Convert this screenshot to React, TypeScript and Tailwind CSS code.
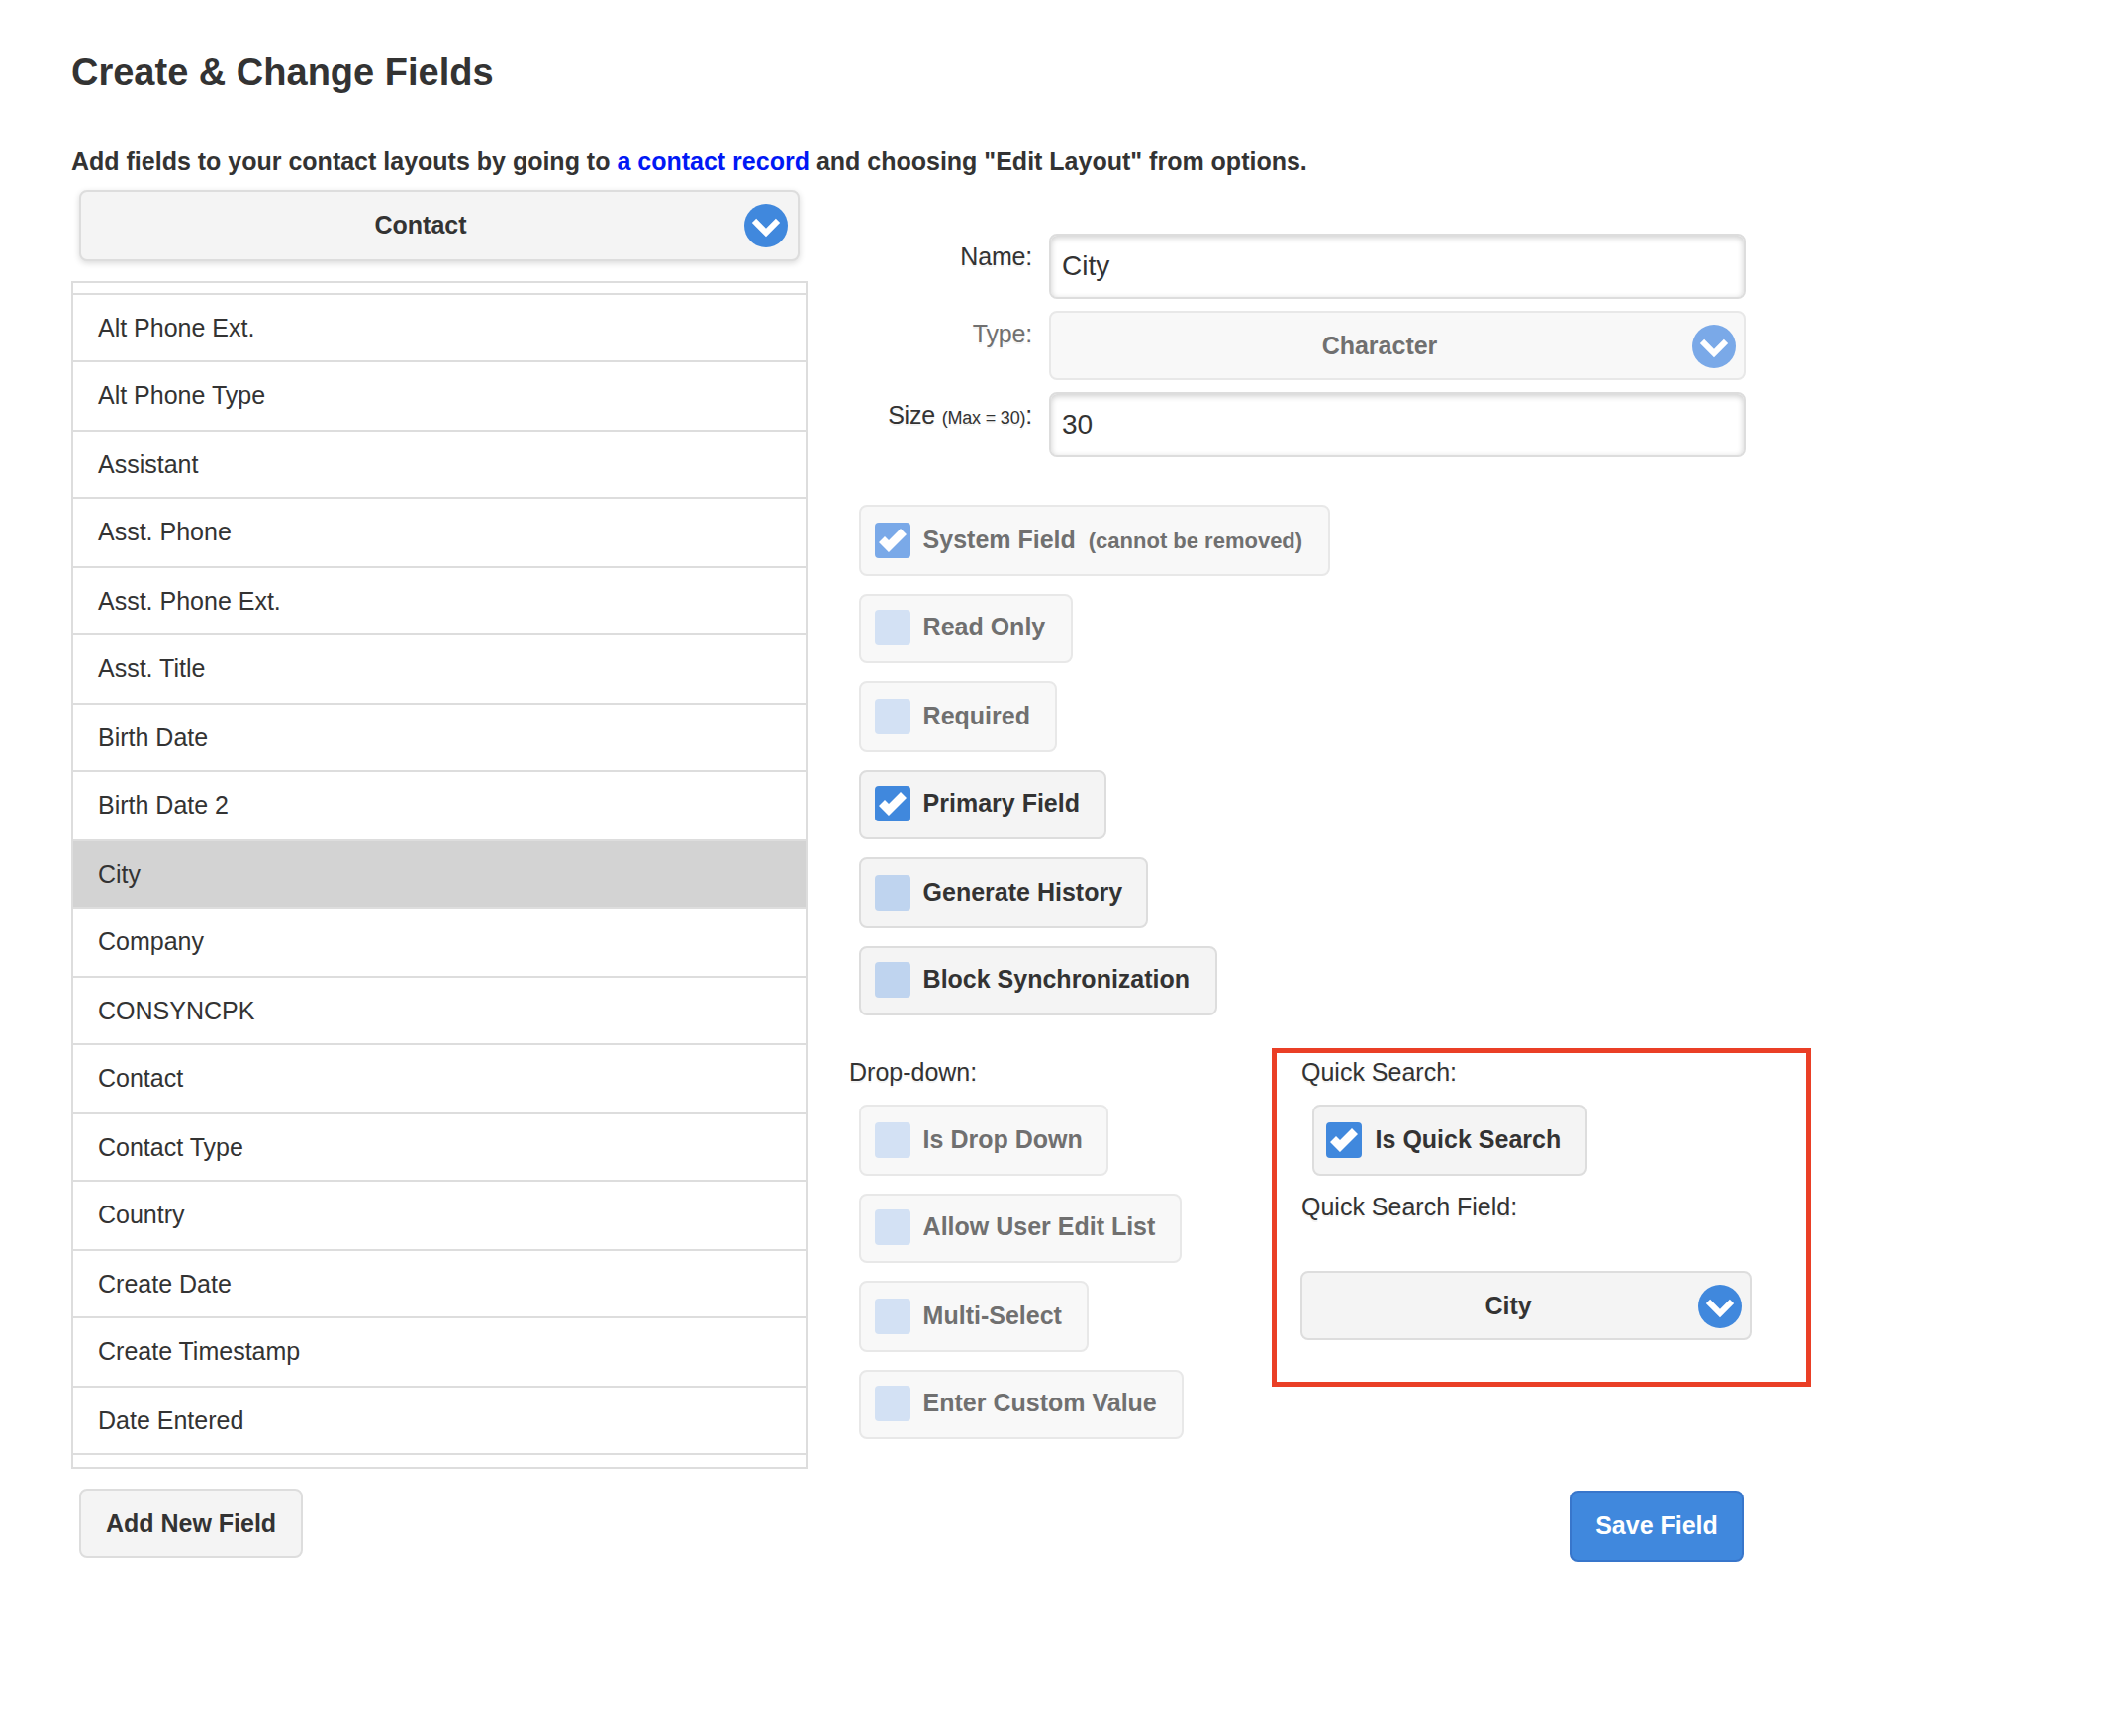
import { useState, type ReactNode } from 'react';
import { clsx } from 'clsx';

const FIELDS = [
  'Alt Phone Ext.',
  'Alt Phone Type',
  'Assistant',
  'Asst. Phone',
  'Asst. Phone Ext.',
  'Asst. Title',
  'Birth Date',
  'Birth Date 2',
  'City',
  'Company',
  'CONSYNCPK',
  'Contact',
  'Contact Type',
  'Country',
  'Create Date',
  'Create Timestamp',
  'Date Entered',
];

function SelectButton({
  label,
  disabled,
  className,
  iconClassName,
}: {
  label: string;
  disabled?: boolean;
  className?: string;
  iconClassName?: string;
}) {
  return (
    <button
      type="button"
      disabled={disabled}
      className={clsx(
        'flex items-start rounded-lg border-2 pt-3 pl-[52px] font-bold',
        disabled ? 'border-[#e8e8e8] bg-[#f8f8f8] text-[#707070]' : 'border-[#ddd] bg-[#f4f4f4]',
        className,
      )}
    >
      <span className="mt-1.5 flex-1 text-center">{label}</span>
      <span
        className={clsx(
          'ml-9 flex size-11 shrink-0 items-center justify-center rounded-full',
          disabled ? 'bg-[#7aa9e8]' : 'bg-[#4088dd]',
          iconClassName,
        )}
      >
        <svg viewBox="0 0 14 14" className="size-7 overflow-visible fill-white">
          <polygon points="11.949,3.404 7,8.354 2.05,3.404 -0.071,5.525 7,12.596 14.07,5.525" />
        </svg>
      </span>
    </button>
  );
}

function CheckButton({
  children,
  checked: initial = false,
  disabled,
  short,
  className,
}: {
  children: ReactNode;
  checked?: boolean;
  disabled?: boolean;
  short?: boolean;
  className?: string;
}) {
  const [checked, setChecked] = useState(initial);

  return (
    <button
      type="button"
      role="checkbox"
      aria-checked={checked}
      disabled={disabled}
      onClick={() => setChecked((v) => !v)}
      className={clsx(
        'flex items-start rounded-lg border-2 font-bold whitespace-nowrap',
        short ? 'h-[70px] pt-3.5' : 'h-[72px] pt-4',
        disabled ? 'border-[#e8e8e8] bg-[#f8f8f8] text-[#707070]' : 'border-[#ddd] bg-[#f4f4f4]',
        className,
      )}
    >
      <span
        className={clsx(
          'mr-[12.6px] flex size-9 shrink-0 items-center justify-center rounded',
          checked && (disabled ? 'bg-[#7aa9e8]' : 'bg-[#4088dd]'),
          !checked && (disabled ? 'bg-[#d3e1f4]' : 'bg-[#bfd4ef]'),
        )}
      >
        {checked && (
          <svg viewBox="0 0 14 14" className="size-7 fill-white">
            <polygon points="14,4 11,1 5.003,6.997 3,5 0,8 4.966,13 4.983,12.982 5,13" />
          </svg>
        )}
      </span>
      <span className="mt-0.5">{children}</span>
    </button>
  );
}

function FormRow({ label, muted, children }: { label: ReactNode; muted?: boolean; children: ReactNode }) {
  return (
    <div className="flex items-start gap-4">
      <div
        className={clsx(
          'w-[187px] pt-2 pr-px text-right tracking-[-0.2px] whitespace-nowrap [text-shadow:0_2px_0_#f3f3f3]',
          muted && 'text-[#707070]',
        )}
      >
        {label}
      </div>
      {children}
    </div>
  );
}

function TextInput({ value }: { value: string }) {
  return (
    <input
      type="text"
      defaultValue={value}
      className="h-[66px] w-[704px] rounded-lg border-2 border-[#ddd] bg-white px-[11px] text-[28px] shadow-[inset_0_2px_6px_rgba(0,0,0,0.2)] outline-none"
    />
  );
}

export default function App() {
  const [selected, setSelected] = useState('City');

  return (
    <div className="h-[1754px] w-[2128px] overflow-hidden bg-white pt-[51px] pl-[72px] font-['Liberation_Sans',Arial,sans-serif] text-[25px] leading-[30px] text-[#333]">
      <h1 className="text-[38px] leading-[44px] font-bold">Create &amp; Change Fields</h1>
      <p className="mt-[53px] font-bold">
        Add fields to your contact layouts by going to{' '}
        <a href="#" className="text-[#0018f5]">
          a contact record
        </a>{' '}
        and choosing "Edit Layout" from options.
      </p>

      <div className="mt-3.5 flex items-start gap-[41px]">
        <div className="w-[744px] shrink-0">
          <SelectButton
            label="Contact"
            className="ml-2 h-[72px] w-[728px] shadow-[0_2px_6px_rgba(0,0,0,0.15)]"
            iconClassName="mr-2.5"
          />
          <div className="mt-5 h-[1200px] overflow-hidden border-2 border-[#ddd] pt-2.5">
            <ul className="border-b-2 border-[#ddd]">
              {FIELDS.map((name) => (
                <li
                  key={name}
                  onClick={() => setSelected(name)}
                  className={clsx(
                    'cursor-pointer border-t-2 border-[#ddd] pt-[18px] pl-[25px] odd:h-[68px] even:h-[70px]',
                    name === selected && 'bg-[#d3d3d3]',
                  )}
                >
                  {name}
                </li>
              ))}
            </ul>
          </div>
          <button
            type="button"
            className="mt-5 ml-2 flex h-[70px] w-[226px] justify-center rounded-lg border-2 border-[#ddd] bg-[#f4f4f4] pt-[18px] font-bold"
          >
            Add New Field
          </button>
        </div>

        <div className="pt-11">
          <div className="flex flex-col gap-3">
            <FormRow label="Name:">
              <TextInput value="City" />
            </FormRow>
            <FormRow label="Type:" muted>
              <SelectButton label="Character" disabled className="h-[70px] w-[704px]" iconClassName="mr-2" />
            </FormRow>
            <FormRow
              label={
                <>
                  Size <span className="text-[18px]">(Max = 30)</span>:
                </>
              }
            >
              <TextInput value="30" />
            </FormRow>
          </div>

          <div className="mt-12 ml-[11px] flex flex-col gap-[18px]">
            <CheckButton checked disabled className="w-[476px] pl-3.5">
              System Field <span className="ml-1.5 text-[22px]">(cannot be removed)</span>
            </CheckButton>
            <CheckButton disabled short className="w-[216px] pl-3.5">
              Read Only
            </CheckButton>
            <CheckButton disabled className="w-[200px] pl-3.5">
              Required
            </CheckButton>
            <CheckButton checked short className="w-[250px] pl-3.5">
              Primary Field
            </CheckButton>
            <CheckButton className="w-[292px] pl-3.5">Generate History</CheckButton>
            <CheckButton short className="w-[362px] pl-3.5">
              Block Synchronization
            </CheckButton>
          </div>

          <div className="mt-[33px] flex items-start">
            <div className="w-[428px] pt-[9px]">
              <div className="pl-px [text-shadow:0_2px_0_#f3f3f3]">Drop-down:</div>
              <div className="mt-[18px] ml-[11px] flex flex-col gap-[18px]">
                <CheckButton disabled className="w-[252px] pl-3.5">
                  Is Drop Down
                </CheckButton>
                <CheckButton disabled short className="w-[326px] pl-3.5">
                  Allow User Edit List
                </CheckButton>
                <CheckButton disabled className="w-[232px] pl-3.5">
                  Multi-Select
                </CheckButton>
                <CheckButton disabled short className="w-[328px] pl-3.5">
                  Enter Custom Value
                </CheckButton>
              </div>
            </div>

            <div className="h-[342px] w-[545px] border-5 border-[#ea3f26] pt-1 pl-6">
              <div className="pl-px [text-shadow:0_2px_0_#f3f3f3]">Quick Search:</div>
              <CheckButton checked className="mt-[18px] ml-3 w-[278px] pl-3">
                <span className="ml-px">Is Quick Search</span>
              </CheckButton>
              <div className="mt-4 pl-px [text-shadow:0_2px_0_#f3f3f3]">Quick Search Field:</div>
              <SelectButton label="City" className="mt-[50px] h-[70px] w-[456px]" iconClassName="mr-2" />
            </div>
          </div>

          <button
            type="button"
            className="mt-[52px] ml-[729px] flex h-[72px] w-[176px] justify-center rounded-lg border-2 border-[#3876cb] bg-[#4088dd] pt-[18px] font-bold text-white"
          >
            Save Field
          </button>
        </div>
      </div>
    </div>
  );
}
